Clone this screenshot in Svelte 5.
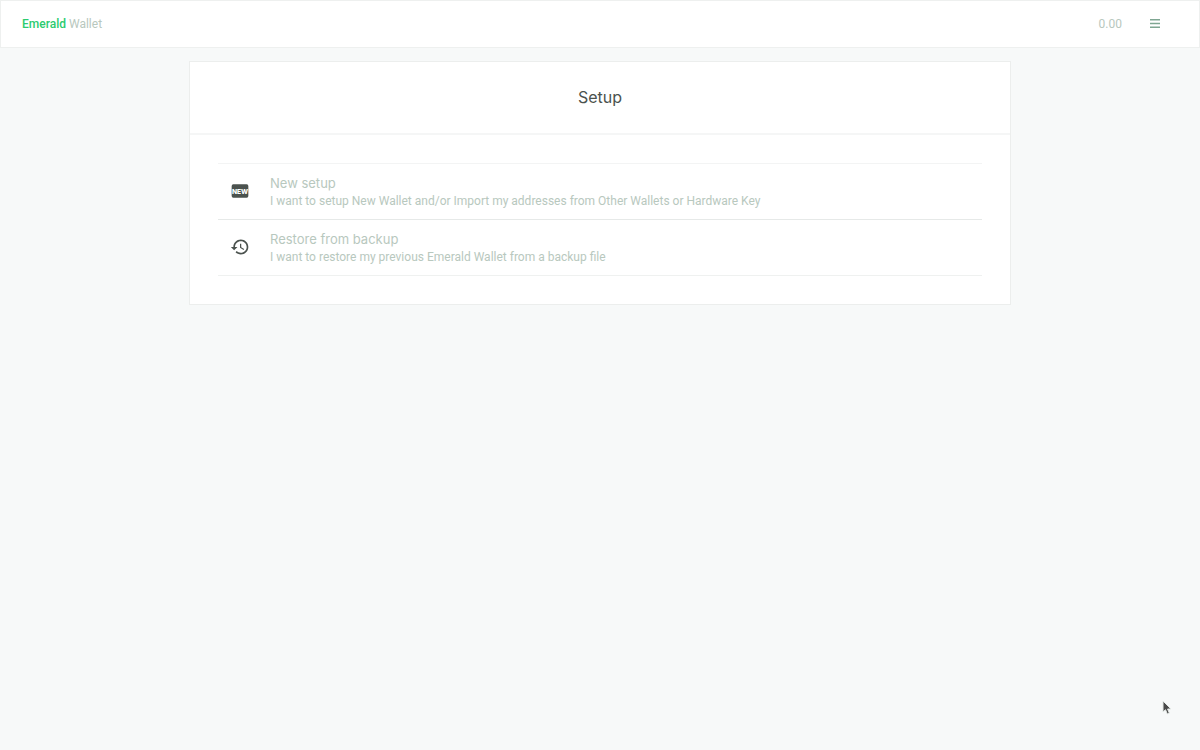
<script lang="ts">
  type Option = {
    id: string;
    title: string;
    description: string;
  };

  export let balance = "0.00";
  export let onSelect: (id: string) => void = () => {};

  const options: Option[] = [
    {
      id: "new",
      title: "New setup",
      description:
        "I want to setup New Wallet and/or Import my addresses from Other Wallets or Hardware Key",
    },
    {
      id: "restore",
      title: "Restore from backup",
      description:
        "I want to restore my previous Emerald Wallet from a backup file",
    },
  ];
</script>

<header class="app-bar">
  <a class="brand" href="#home"><span>Emerald</span> Wallet</a>
  <div class="actions">
    <span class="balance">{balance}</span>
    <button class="menu" type="button" aria-label="Menu">
      <svg viewBox="0 0 10 9" width="10" height="9">
        <path d="M0 .8h10M0 4.5h10M0 8.200h10" />
      </svg>
    </button>
  </div>
</header>

<main class="card">
  <h1>Setup</h1>
  <ul class="options">
    {#each options as option (option.id)}
      <li>
        <button type="button" on:click={() => onSelect(option.id)}>
          {#if option.id === "new"}
            <svg class="icon" viewBox="0 0 24 24">
              <rect x="2" y="4" width="20" height="16" rx="2" />
              <text x="12" y="15" text-anchor="middle">NEW</text>
            </svg>
          {:else}
            <svg class="icon" viewBox="0 0 24 24">
              <path
                d="M13 3c-4.970 0-9 4.030-9 9H1l3.890 3.890.07.14L9 12H6c0-3.870 3.130-7 7-7s7 3.130 7 7-3.130 7-7 7c-1.930 0-3.680-.79-4.940-2.060l-1.420 1.420C8.270 19.990 10.510 21 13 21c4.970 0 9-4.030 9-9s-4.030-9-9-9zm-1 5v5l4.280 2.540.72-1.210-3.500-2.080V8H12z"
              />
            </svg>
          {/if}
          <span class="text">
            <span class="title">{option.title}</span>
            <span class="description">{option.description}</span>
          </span>
        </button>
      </li>
    {/each}
  </ul>
</main>

<svg class="pointer" viewBox="0 0 10 16" aria-hidden="true">
  <path d="M1 1v11l2.500-2.300L5.300 14l2-.9L5.600 9H9z" />
</svg>

<style>
  :global(body) {
    background-color: #f7f9f9;
    color: #b8c8be;
    font-family: Inter, "Liberation Sans", sans-serif;
  }

  .app-bar {
    box-sizing: border-box;
    height: 48px;
    display: flex;
    align-items: center;
    justify-content: space-between;
    padding: 0 39px 1px 21px;
    background-color: #fff;
    border: 1px solid #eef0ef;
    font-family: Roboto, Inter, sans-serif;
    font-size: 12px;
  }

  .brand {
    color: inherit;
    text-decoration: none;
  }

  .brand span {
    color: #2ccb70;
    font-weight: 500;
  }

  .actions {
    display: flex;
    align-items: center;
    gap: 28px;
  }

  button {
    padding: 0;
    border: none;
    background: none;
    color: inherit;
    font: inherit;
    cursor: pointer;
  }

  .menu svg {
    display: block;
    stroke: #7fa692;
    stroke-width: 1.5;
  }

  .card {
    box-sizing: border-box;
    max-width: 822px;
    margin: 13px auto 0;
    background-color: #fff;
    border: 1px solid #eceeed;
  }

  h1 {
    margin: 0;
    padding: 24px;
    border-bottom: 2px solid #f5f6f6;
    color: #4b524e;
    font-size: 16px;
    font-weight: 400;
    line-height: 23px;
    text-align: center;
  }

  .options {
    margin: 0;
    padding: 28px;
    list-style: none;
  }

  li {
    border-bottom: 1px solid #eff1f0;
  }

  li:first-child {
    border-top: 1px solid #f3f4f4;
    border-bottom-color: #e6e9e8;
  }

  li button {
    width: 100%;
    display: flex;
    align-items: center;
    gap: 20px;
    padding: 9px 12px 10px;
    text-align: left;
  }

  .icon {
    flex: none;
    width: 20px;
    height: 20px;
    fill: #4b524e;
  }

  .icon text {
    fill: #fff;
    font-size: 8px;
    font-weight: 800;
  }

  .title,
  .description {
    display: block;
  }

  .title {
    font-size: 13px;
    line-height: 20px;
  }

  .description {
    font-family: Roboto, Inter, sans-serif;
    font-size: 12px;
    line-height: 16px;
  }

  .pointer {
    position: fixed;
    right: 28px;
    bottom: 34px;
    width: 10px;
    height: 16px;
    fill: #4a4a4a;
    stroke: #e3e8e5;
    pointer-events: none;
  }
</style>
